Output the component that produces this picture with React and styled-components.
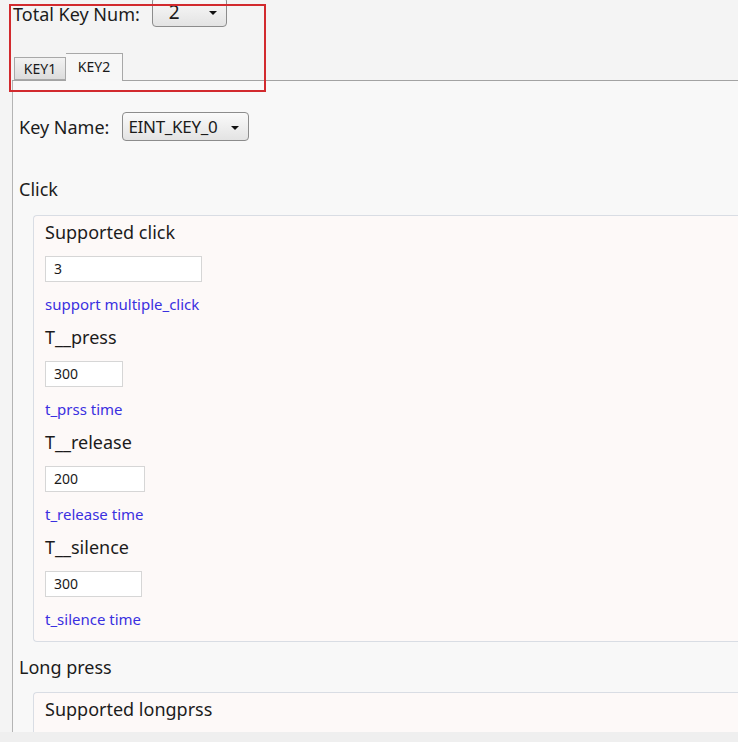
import React from "react";
import styled, { createGlobalStyle } from "styled-components";

const Global = createGlobalStyle`
  html, body { margin: 0; padding: 0; }
  body {
    background: #f4f4f4;
    font-family: "Noto Sans", "Open Sans", Arial, sans-serif;
    color: #1c1c1c;
    overflow: hidden;
  }
`;

const Page = styled.div`
  width: 738px;
  height: 742px;
  display: flex;
  flex-direction: column;
  overflow: hidden;
  background: #f4f4f4;
`;

const Top = styled.div`
  position: relative;
  flex: none;
`;

const Highlight = styled.div`
  position: absolute;
  left: 9px;
  top: 4px;
  width: 253px;
  height: 84px;
  border: 2px solid #d22a2e;
  pointer-events: none;
`;

const HeaderRow = styled.div`
  display: flex;
  align-items: center;
  height: 27px;
  padding-left: 13px;
  gap: 12px;
`;

const Label = styled.span`
  font-size: 18px;
  line-height: 22px;
  white-space: nowrap;
`;

const Select = styled.div`
  box-sizing: border-box;
  display: flex;
  align-items: center;
  justify-content: space-between;
  width: ${(p) => p.$w}px;
  height: ${(p) => p.$h || 29}px;
  margin-top: ${(p) => p.$mt || 0}px;
  padding: 0 9px 0 ${(p) => p.$pl || 5}px;
  border: 1px solid #8c8c8c;
  border-radius: 4px;
  background: linear-gradient(#fafafa, #e3e3e3);
  font-size: ${(p) => p.$fs || 18}px;
  letter-spacing: ${(p) => p.$ls || 0}px;
  color: #1a1a1a;
  white-space: nowrap;
`;

const Caret = styled.span`
  flex: none;
  width: 0;
  height: 0;
  border-left: 4px solid transparent;
  border-right: 4px solid transparent;
  border-top: 4px solid #111;
  margin-top: 2px;
`;

const TabBar = styled.div`
  display: flex;
  align-items: flex-end;
  margin: 26px 0 0 12px;
  padding-left: 2px;
  height: 27px;
  border-bottom: 1px solid #a3a3a3;
`;

const Tab = styled.div`
  box-sizing: border-box;
  display: flex;
  align-items: center;
  justify-content: center;
  width: ${(p) => (p.$active ? 57 : 52)}px;
  height: ${(p) => (p.$active ? 28 : 23)}px;
  margin-bottom: ${(p) => (p.$active ? -1 : 0)}px;
  border: 1px solid #a8a8a8;
  border-bottom: ${(p) => (p.$active ? "none" : "1px solid #a8a8a8")};
  border-left: ${(p) => (p.$active ? "none" : "1px solid #a8a8a8")};
  background: ${(p) =>
    p.$active ? "#f7f7f7" : "linear-gradient(#f2f2f2, #dcdcdc)"};
  font-size: 14px;
  color: #1a1a1a;
  padding-bottom: ${(p) => (p.$active ? 3 : 0)}px;
`;

const Panel = styled.div`
  flex: 1;
  min-height: 0;
  overflow: hidden;
  margin-left: 12px;
  border-left: 1px solid #b4b4b4;
  background: #f8f8f8;
  padding: 31px 0 0 6px;
  display: flex;
  flex-direction: column;
`;

const KeyRow = styled.div`
  display: flex;
  align-items: center;
  gap: 13px;
`;

const SectionTitle = styled.div`
  font-size: 18px;
  line-height: 22px;
  margin-top: ${(p) => p.$mt}px;
`;

const Card = styled.div`
  flex: none;
  margin: ${(p) => p.$mt}px 0 0 14px;
  border: 1px solid #d9dde4;
  border-right: none;
  border-radius: 4px 0 0 4px;
  background: #fdf9f8;
  padding: 5px 0 12px 11px;
  display: flex;
  flex-direction: column;
`;

const Field = styled.div`
  display: flex;
  flex-direction: column;
  align-items: flex-start;
  & + & {
    margin-top: 12px;
  }
`;

const FieldLabel = styled.div`
  font-size: 18px;
  line-height: 22px;
  color: #1c1c1c;
`;

const Input = styled.div`
  box-sizing: border-box;
  width: ${(p) => p.$w}px;
  height: 26px;
  margin-top: 13px;
  border: 1px solid #d6d6d6;
  background: #fff;
  font-size: 14px;
  line-height: 24px;
  padding-left: 8px;
  color: #1a1a1a;
`;

const Hint = styled.div`
  margin-top: 12px;
  font-size: 15px;
  line-height: 20px;
  color: #3a30e0;
`;

const Footer = styled.div`
  flex: none;
  height: 10px;
  background: #efefef;
`;

const fields = [
  { label: "Supported click", value: "3", w: 157, hint: "support multiple_click" },
  { label: "T__press", value: "300", w: 78, hint: "t_prss time" },
  { label: "T__release", value: "200", w: 100, hint: "t_release time" },
  { label: "T__silence", value: "300", w: 97, hint: "t_silence time" },
];

export default function App() {
  return (
    <Page>
      <Global />
      <Top>
        <HeaderRow>
          <Label>Total Key Num:</Label>
          <Select $w={75} $h={30} $mt={-3} $pl={16} $fs={19}>
            <span>2</span>
            <Caret />
          </Select>
        </HeaderRow>
        <TabBar>
          <Tab>KEY1</Tab>
          <Tab $active>KEY2</Tab>
        </TabBar>
        <Highlight />
      </Top>
      <Panel>
        <KeyRow>
          <Label>Key Name:</Label>
          <Select $w={127} $fs={17} $ls={-0.3}>
            <span>EINT_KEY_0</span>
            <Caret />
          </Select>
        </KeyRow>
        <SectionTitle $mt={37}>Click</SectionTitle>
        <Card $mt={15}>
          {fields.map((f) => (
            <Field key={f.label}>
              <FieldLabel>{f.label}</FieldLabel>
              <Input $w={f.w}>{f.value}</Input>
              <Hint>{f.hint}</Hint>
            </Field>
          ))}
        </Card>
        <SectionTitle $mt={14}>Long press</SectionTitle>
        <Card $mt={14}>
          <Field>
            <FieldLabel>Supported longprss</FieldLabel>
            <Input $w={166} />
          </Field>
        </Card>
      </Panel>
      <Footer />
    </Page>
  );
}
